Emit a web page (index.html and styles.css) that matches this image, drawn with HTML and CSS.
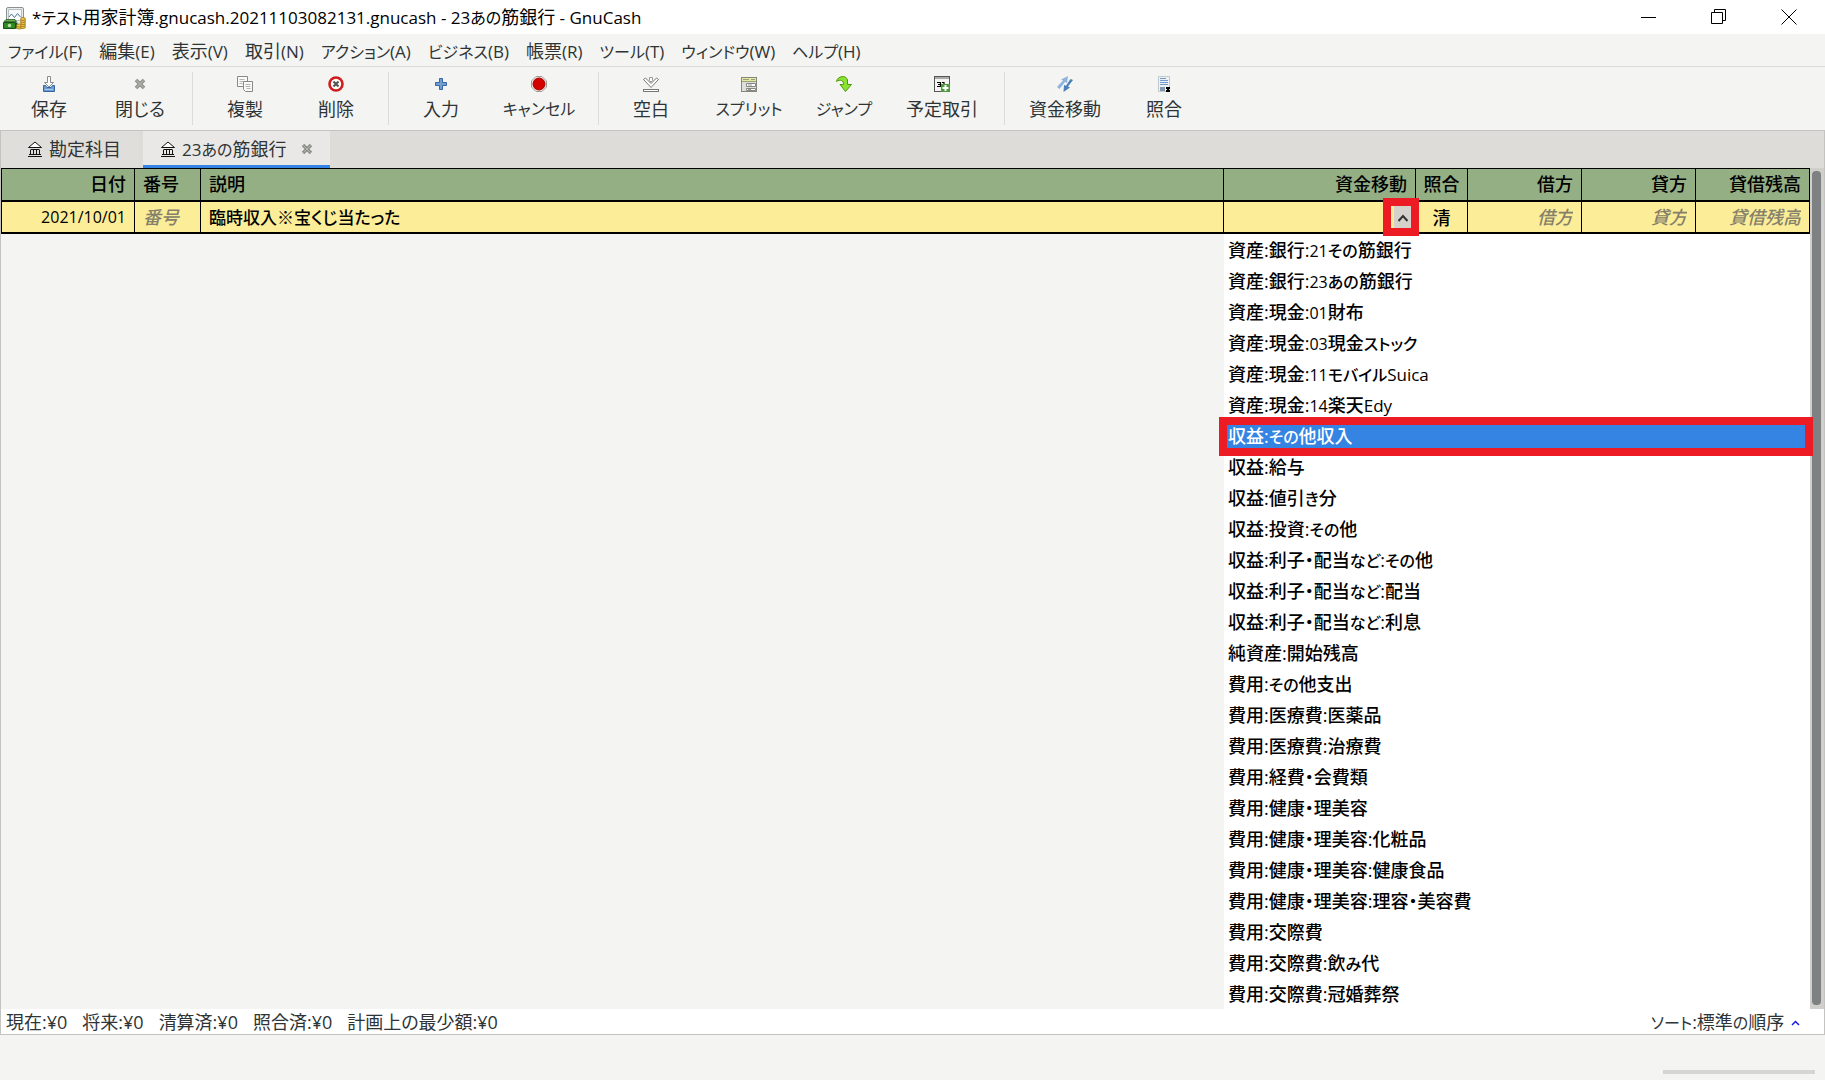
FILE: index.html
```html
<!DOCTYPE html>
<html lang="ja">
<head>
<meta charset="utf-8">
<title>GnuCash</title>
<link rel="stylesheet" href="styles.css">
</head>
<body>
<div class="window">
  <header class="titlebar">
    <svg class="app-icon" width="23" height="24" viewBox="0 0 23 24" aria-hidden="true">
      <rect x="3.500" y="1.500" width="17" height="18" rx="1.500" fill="#e9ece9" stroke="#8b918c"/>
      <rect x="5.500" y="3.500" width="13" height="11" fill="#f7f9fb" stroke="#b9c0c4"/>
      <path d="M6 11l2.500-3 3 3.500 3-4 3 3.500" fill="none" stroke="#56728f"/>
      <path d="M.5 16.500h12v6H.5z" fill="#2f8a22" stroke="#1c4f17"/>
      <path d="M1 15.500l2-2h9l1.500 2z" fill="#67b04d" stroke="#1c4f17" stroke-width=".7"/>
      <circle cx="6.500" cy="19.500" r="1.800" fill="#b8dfa2"/>
      <path d="M12.500 16.500h2v6h-2z" fill="#174f14"/>
      <g fill="#ecc74c" stroke="#9b7415" stroke-width=".8"><ellipse cx="16.500" cy="21.500" rx="3" ry="1.500"/><ellipse cx="16.500" cy="19.500" rx="3" ry="1.500"/><ellipse cx="20" cy="21" rx="2.500" ry="1.500"/><ellipse cx="20" cy="19" rx="2.500" ry="1.500"/><ellipse cx="20" cy="17" rx="2.500" ry="1.500"/><ellipse cx="20" cy="15" rx="2.500" ry="1.500"/><ellipse cx="20" cy="13" rx="2.500" ry="1.500"/></g>
    </svg>
    <h1 class="title"><span class="latin">*</span><span class="kana">テスト</span>用家計簿<span class="latin">.gnucash.20211103082131.gnucash - 23</span><span class="kana">あの</span>筋銀行<span class="latin"> - GnuCash</span></h1>
    <div class="window-controls">
      <button aria-label="最小化"><svg width="16" height="16"><path d="M0 8.500h15" stroke="#000" fill="none"/></svg></button>
      <button aria-label="元に戻す"><svg width="16" height="16"><path d="M.5 3.500h11v11H.5zM3.500 3.500v-3h11v11h-3" stroke="#000" fill="none"/></svg></button>
      <button aria-label="閉じる"><svg width="16" height="16"><path d="M.5.5l15 15M15.500.5l-15 15" stroke="#000" fill="none"/></svg></button>
    </div>
  </header>

  <nav class="menubar">
    <button><span class="kana">ファイル</span><span class="latin">(F)</span></button>
    <button>編集<span class="latin">(E)</span></button>
    <button>表示<span class="latin">(V)</span></button>
    <button>取引<span class="latin">(N)</span></button>
    <button><span class="kana">アクション</span><span class="latin">(A)</span></button>
    <button><span class="kana">ビジネス</span><span class="latin">(B)</span></button>
    <button>帳票<span class="latin">(R)</span></button>
    <button><span class="kana">ツール</span><span class="latin">(T)</span></button>
    <button><span class="kana">ウィンドウ</span><span class="latin">(W)</span></button>
    <button><span class="kana">ヘルプ</span><span class="latin">(H)</span></button>
  </nav>

  <div class="toolbar">
    <button class="tool">
      <svg width="16" height="16" viewBox="0 0 16 16"><path d="M6.500.5h3v6h3L8 11 3.500 6.500h3z" fill="#fff" stroke="#8a8c8a"/><path d="M2.500 9.500h2l1.500 2h4l1.500-2h2v6h-11z" fill="#6d9bd0" stroke="#3465a4"/><path d="M4 13.500h8" stroke="#a9c6e8"/></svg>
      保存</button>
    <button class="tool tool-close">
      <svg width="16" height="16" viewBox="0 0 16 16"><path d="M4 4l8 8M12 4l-8 8" stroke="#888a85" stroke-width="3.600" fill="none"/><path d="M4.500 4.500l7 7M11.500 4.500l-7 7" stroke="#b4b6b1" stroke-width="1.200" fill="none"/></svg>
      閉じる</button>
    <span class="separator"></span>
    <button class="tool">
      <svg width="16" height="16" viewBox="0 0 16 16"><path d="M.5.5h10v10H.5z" fill="#fafafa" stroke="#888a85"/><path d="M2.500 3.500h5M2.500 5.500h4M2.500 7.500h3" stroke="#b5b5b3"/><path d="M6.500 5.500h9v10h-7l-2-2z" fill="#fafafa" stroke="#888a85"/><path d="M8.500 8.500h5M8.500 10.500h5M9.500 12.500h4" stroke="#b5b5b3"/></svg>
      複製</button>
    <button class="tool tool-close">
      <svg width="16" height="16" viewBox="0 0 16 16"><circle cx="8" cy="8" r="6.500" fill="#fff" stroke="#cf1d1d" stroke-width="2.600"/><path d="M5.500 5.500l5 5M10.500 5.500l-5 5" stroke="#555753" stroke-width="2.200"/></svg>
      削除</button>
    <span class="separator"></span>
    <button class="tool">
      <svg width="16" height="16" viewBox="0 0 16 16"><path d="M6.500 2.500h3v4h4v3h-4v4h-3v-4h-4v-3h4z" fill="#729fcf" stroke="#3465a4"/></svg>
      入力</button>
    <button class="tool tool-wide">
      <svg width="16" height="16" viewBox="0 0 16 16"><path d="M5 .5h6L15.500 5v6L11 15.500H5L.5 11V5z" fill="#eee" stroke="#a09a94"/><circle cx="8" cy="8" r="6" fill="#d40000" stroke="#a40000"/></svg>
      <span class="kana">キャンセル</span></button>
    <span class="separator"></span>
    <button class="tool">
      <svg width="16" height="16" viewBox="0 0 16 16"><path d="M.5 3.500l2-1.500L8 7.500 13.500 2l2 1.500L8 11.500z" fill="#fff" stroke="#777"/><path d="M6.500 1.500h3v3L8 6 6.500 4.500z" fill="#fff" stroke="#999"/><rect x=".5" y="13.500" width="15" height="2" fill="#fff" stroke="#777"/></svg>
      空白</button>
    <button class="tool tool-wide">
      <svg width="16" height="16" viewBox="0 0 16 16"><rect x=".5" y="1.500" width="15" height="14" fill="#dedfdb" stroke="#85877f"/><path d="M1 2h14v3H1z" fill="#e4ec9c"/><path d="M2 3.500h6M10 3.500h4M1 5.500h14" stroke="#9a9d83"/><path d="M5.500 7.500h9v3h-9zM5.500 12.500h9v2h-9z" fill="#fff" stroke="#85877f"/><path d="M7 9h4M7 13.500h3" stroke="#999"/></svg>
      <span class="kana">スプリット</span></button>
    <button class="tool tool-narrow">
      <svg width="16" height="16" viewBox="0 0 16 16"><path d="M.5 5.500C1.500 0 10-1.500 11.500 4v4.500h4L9.500 15.500l-5.500-7h3.500C8 4.500 4 3 .5 5.500z" fill="#8ae234" stroke="#4e9a06"/></svg>
      <span class="kana">ジャンプ</span></button>
    <button class="tool tool-xwide">
      <svg width="16" height="16" viewBox="0 0 16 16"><rect x=".5" y=".5" width="15" height="15" fill="#f4f4f2" stroke="#555753"/><path d="M1 2h14" stroke="#aaaca8" stroke-width="2"/><path d="M3 6.500h3.500v4H3M4 8.500h2.500M8 6.500h2v4" fill="none" stroke="#000" stroke-width="1.200"/><path d="M7 8h9v8H7z" fill="#4b9b3d"/><path d="M11.500 9v6M8.500 12h6" stroke="#fff" stroke-width="2"/></svg>
      予定取引</button>
    <span class="separator"></span>
    <button class="tool tool-wide">
      <svg width="16" height="16" viewBox="0 0 16 16"><path d="M0 11L6 4.500 4 3.500 11 0 10 7 8 6 2.500 13z" fill="#8fb3dc"/><path d="M16 4L11 10.500l2 1L6.500 16 7 9l2 .8L13.500 3z" fill="#4a7fb8"/></svg>
      資金移動</button>
    <button class="tool tool-close">
      <svg width="16" height="16" viewBox="0 0 16 16"><path d="M2.500.5h11v15h-11z" fill="#edf2f7" stroke="#c2c8ce"/><path d="M4 2.500h6M4 4.500h8M4 6.500h8M4 8.500h8" stroke="#7099ca"/><path d="M4 11h5v4H4z" fill="#8498ae"/><path d="M10 11h4v2h-1v1h1v2h-4v-2h1v-1h-1z" fill="#000"/></svg>
      照合</button>
  </div>

  <main class="notebook">
    <div class="tabs" role="tablist">
      <button class="tab" role="tab">
        <svg width="14" height="16" viewBox="0 0 14 16"><path d="M.5 6.500L7 1l6.500 5.500z" fill="#fff" stroke="#111"/><path d="M2.500 8.500h9M2.500 9v4M5.500 9v4M8.500 9v4M11.500 9v4M1 13.500h12M0 15.500h14" stroke="#111" fill="none"/></svg>
        勘定科目</button>
      <button class="tab tab-active" role="tab" aria-selected="true">
        <svg width="14" height="16" viewBox="0 0 14 16"><path d="M.5 6.500L7 1l6.500 5.500z" fill="#fff" stroke="#111"/><path d="M2.500 8.500h9M2.500 9v4M5.500 9v4M8.500 9v4M11.500 9v4M1 13.500h12M0 15.500h14" stroke="#111" fill="none"/></svg>
        <span><span class="latin">23</span><span class="kana">あの</span>筋銀行</span>
        <svg class="tab-close" width="12" height="12" viewBox="0 0 12 12"><path d="M2 2l8 8M10 2l-8 8" stroke="#8b8d88" stroke-width="3.400"/><path d="M2.500 2.500l7 7M9.500 2.500l-7 7" stroke="#b4b6b1"/></svg>
      </button>
    </div>

    <div class="register">
      <div class="sheet">
        <table class="ledger">
          <colgroup><col class="c-date"><col class="c-num"><col><col class="c-transfer"><col class="c-rec"><col class="c-amount"><col class="c-amount"><col class="c-amount"></colgroup>
          <thead>
            <tr><th class="end">日付</th><th>番号</th><th>説明</th><th class="end">資金移動</th><th class="mid">照合</th><th class="end">借方</th><th class="end">貸方</th><th class="end">貸借残高</th></tr>
          </thead>
          <tbody>
            <tr>
              <td class="end"><input class="date" aria-label="日付" value="2021/10/01"></td>
              <td><input aria-label="番号" placeholder="番号"></td>
              <td><input class="description" aria-label="説明" value="臨時収入※宝くじ当たった"></td>
              <td class="transfer">
                <div class="combo"><input aria-label="資金移動"><button aria-label="勘定科目を選択"><svg width="12" height="8"><path d="M1.500 7L6 2l4.500 5" fill="none" stroke="#333" stroke-width="2"/></svg></button></div>
                <span class="marker marker-button"></span>
              </td>
              <td class="mid"><input aria-label="照合" value="清"></td>
              <td class="end"><input aria-label="借方" placeholder="借方"></td>
              <td class="end"><input aria-label="貸方" placeholder="貸方"></td>
              <td class="end"><input aria-label="貸借残高" placeholder="貸借残高"></td>
            </tr>
          </tbody>
        </table>
        <ul class="popup" role="listbox" aria-label="勘定科目">
          <li role="option">資産:銀行:<span class="digits">21</span><span class="kana">その</span>筋銀行</li>
          <li role="option">資産:銀行:<span class="digits">23</span><span class="kana">あの</span>筋銀行</li>
          <li role="option">資産:現金:<span class="digits">01</span>財布</li>
          <li role="option">資産:現金:<span class="digits">03</span>現金<span class="kana">ストック</span></li>
          <li role="option">資産:現金:<span class="digits">11</span><span class="kana">モバイル</span><span class="latin">Suica</span></li>
          <li role="option">資産:現金:<span class="digits">14</span>楽天<span class="latin">Edy</span></li>
          <li role="option" class="selected" aria-selected="true">収益:<span class="kana">その</span>他収入<span class="marker marker-row"></span></li>
          <li role="option">収益:給与</li>
          <li role="option">収益:値引<span class="kana">き</span>分</li>
          <li role="option">収益:投資:<span class="kana">その</span>他</li>
          <li role="option">収益:利子・配当<span class="kana">など</span>:<span class="kana">その</span>他</li>
          <li role="option">収益:利子・配当<span class="kana">など</span>:配当</li>
          <li role="option">収益:利子・配当<span class="kana">など</span>:利息</li>
          <li role="option">純資産:開始残高</li>
          <li role="option">費用:<span class="kana">その</span>他支出</li>
          <li role="option">費用:医療費:医薬品</li>
          <li role="option">費用:医療費:治療費</li>
          <li role="option">費用:経費・会費類</li>
          <li role="option">費用:健康・理美容</li>
          <li role="option">費用:健康・理美容:化粧品</li>
          <li role="option">費用:健康・理美容:健康食品</li>
          <li role="option">費用:健康・理美容:理容・美容費</li>
          <li role="option">費用:交際費</li>
          <li role="option">費用:交際費:飲<span class="kana">み</span>代</li>
          <li role="option">費用:交際費:冠婚葬祭</li>
        </ul>
      </div>
      <div class="scrollbar"><div class="thumb"></div></div>
    </div>

    <div class="summary">
      <span>現在:¥0</span>
      <span>将来:¥0</span>
      <span>清算済:¥0</span>
      <span>照合済:¥0</span>
      <span>計画上の最少額:¥0</span>
      <span class="sort"><span class="kana">ソート</span>:標準<span class="kana">の</span>順序 <svg width="9" height="6"><path d="M1 5l3.500-3.500L8 5" fill="none" stroke="#1a1ae0" stroke-width="1.500"/></svg></span>
    </div>
  </main>

  <footer class="statusbar"><div class="progress"></div></footer>
</div>
</body>
</html>
```
FILE: styles.css
```css
* { box-sizing: border-box; }

body {
  margin: 0;
  background: #f4f4f2;
  color: #2e3436;
  font: 18px/24px "Open Sans", "Noto Sans CJK JP", sans-serif;
  font-feature-settings: "palt";
}

button, input {
  margin: 0;
  padding: 0;
  border: 0;
  background: none;
  color: inherit;
  font: inherit;
  font-feature-settings: inherit;
}

.latin { font-size: 17px; }
.kana, .digits { font-size: 16px; }

.window {
  display: flex;
  flex-direction: column;
  min-height: 100vh;
}

.titlebar {
  display: flex;
  align-items: center;
  height: 34px;
  padding: 0 1px 0 3px;
  background: #fff;
  color: #000;
}
.app-icon { margin-top: 1px; }
.title {
  flex: 1;
  margin: 0 0 0 6px;
  font-size: 18px;
  font-weight: 400;
  white-space: pre;
}
.window-controls { display: flex; }
.window-controls button {
  display: flex;
  align-items: center;
  justify-content: center;
  width: 70px;
  height: 34px;
}

.menubar {
  display: flex;
  gap: 17px;
  height: 33px;
  padding: 2px 0 0 8px;
  border-bottom: 1px solid #dcdcda;
}
.menubar button { white-space: nowrap; }

.toolbar {
  display: flex;
  height: 63px;
  padding: 5px 0 5px 4px;
}
.tool {
  display: flex;
  flex-direction: column;
  align-items: center;
  gap: 5px;
  width: 90px;
  padding-top: 4px;
  white-space: nowrap;
}
.tool-narrow { width: 84px; }
.tool-close { width: 92px; }
.tool-wide { width: 106px; }
.tool-xwide { width: 112px; }
.separator {
  width: 1px;
  margin: 0 7px 0 6px;
  background: #dcdcda;
}

.notebook {
  display: flex;
  flex: 1;
  flex-direction: column;
  border: 1px solid #c4c3bf;
}

.tabs {
  display: flex;
  gap: 4px;
  height: 37px;
  background: #dddcd8;
}
.tab {
  display: flex;
  align-items: center;
  gap: 7px;
  height: 37px;
  padding: 0 18px 1px 27px;
  background: #e0deda;
}
.tab-active {
  padding: 2px 17px 0 18px;
  border-bottom: 3px solid #3584e4;
  background: #e9e8e6;
}
.tab .tab-close { margin-left: 8px; }

.register {
  display: flex;
  flex: 1;
}
.sheet {
  position: relative;
  flex: 1;
  min-height: 841px;
}

.ledger {
  width: 100%;
  border-collapse: collapse;
  table-layout: fixed;
  color: #000;
}
.c-date { width: 133px; }
.c-num { width: 66px; }
.c-transfer { width: 192px; }
.c-rec { width: 52px; }
.c-amount { width: 114px; }
.ledger th, .ledger td {
  border: 1px solid #000;
  text-align: left;
}
.ledger th {
  height: 32px;
  padding: 0 8px 1px;
  border-bottom-width: 2px;
  background: #94af84;
  font-weight: 500;
}
.ledger td {
  height: 32px;
  padding: 0 8px;
  border-bottom-width: 2px;
  background: #fced99;
  font-weight: 500;
}
.ledger .end, .ledger .end input { text-align: right; }
.ledger .mid, .ledger .mid input { text-align: center; }
.ledger th.mid { padding: 0 0 1px; }
.ledger input {
  display: block;
  width: 100%;
  height: 26px;
  line-height: 24px;
}
.ledger .date { font-size: 16px; }
.ledger .description { font-size: 17px; }
.ledger ::placeholder {
  color: #85806a;
  font-style: italic;
  opacity: 1;
}
.ledger .transfer {
  position: relative;
  padding: 0 3px 0 8px;
}
.combo { display: flex; }
.combo button {
  flex: none;
  width: 18px;
  height: 26px;
  background: #d5d2cc;
  line-height: 8px;
}

.marker {
  position: absolute;
  border: 8px solid #ed1c24;
}
.marker-button {
  z-index: 2;
  top: -4px;
  right: -4px;
  width: 36px;
  height: 38px;
}
.marker-row { inset: -3px -3px -5px -5px; }

.popup {
  position: absolute;
  top: 66px;
  right: 0;
  width: 586px;
  margin: 0;
  padding: 0;
  background: #fff;
  color: #000;
  font-weight: 500;
  list-style: none;
}
.popup li {
  position: relative;
  height: 31px;
  padding: 0 4px;
  line-height: 32px;
  white-space: nowrap;
}
.popup .selected {
  background: #3584e4;
  color: #fff;
}

.scrollbar {
  width: 14px;
  padding: 3px 3px 4px 2px;
  background: #d0cfcc;
}
.thumb {
  height: 100%;
  border-radius: 4px;
  background: #7e8182;
}

.summary {
  display: flex;
  gap: 15px;
  height: 25px;
  padding: 0 24px 0 5px;
  background: #fff;
  line-height: 26px;
  white-space: nowrap;
}
.sort { margin-left: auto; }
.sort svg { margin: 0 0 3px 2px; }

.statusbar {
  display: flex;
  justify-content: flex-end;
  height: 45px;
  padding: 35px 10px 0 0;
}
.progress {
  width: 152px;
  height: 4px;
  background: #d6d5d2;
}
```
